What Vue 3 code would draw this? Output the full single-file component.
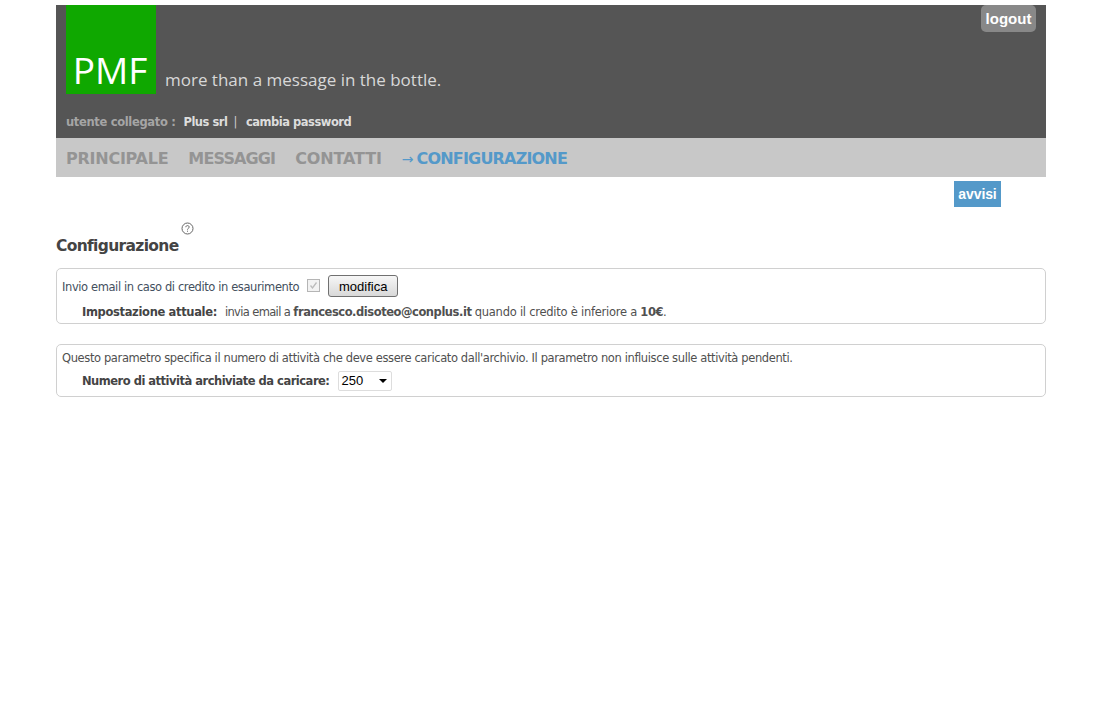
<script setup>
const navItems = [
  { label: 'PRINCIPALE', cls: 'nav-wide' },
  { label: 'MESSAGGI', cls: 'nav-tight' },
  { label: 'CONTATTI', cls: 'nav-mid' }
]
</script>

<template>
  <div class="page">
    <header class="header">
      <div class="brand">
        <div class="logo">PMF</div>
        <div class="tagline">more than a message in the bottle.</div>
        <a class="logout">logout</a>
      </div>
      <div class="user">
        <span class="user-label">utente collegato :</span>
        <b class="user-name">Plus srl</b>
        <span class="sep">|</span>
        <b class="user-name">cambia password</b>
      </div>
    </header>
    <nav class="nav">
      <a v-for="item in navItems" :key="item.label" class="nav-item" :class="item.cls">{{ item.label }}</a>
      <span class="nav-current"><span class="arrow">→</span>CONFIGURAZIONE</span>
    </nav>
    <div class="notice-row"><a class="notice">avvisi</a></div>
    <div class="title-row">
      <h1 class="title">Configurazione</h1>
      <svg class="help" width="13" height="13" viewBox="0 0 13 13">
        <circle cx="6.5" cy="6.5" r="5.5" fill="none" stroke="#666" stroke-width="1" />
        <path d="M4.8 5.2c0-1 .8-1.6 1.7-1.6s1.7.6 1.7 1.5c0 1.2-1.7 1.2-1.7 2.5" fill="none" stroke="#666" stroke-width="1" />
        <rect x="6" y="8.7" width="1" height="1" fill="#666" />
      </svg>
    </div>
    <section class="box first">
      <div class="line top-line">
        <span class="label">Invio email in caso di credito in esaurimento</span>
        <span class="check">
          <svg width="13" height="13" viewBox="0 0 13 13">
            <rect x="0.5" y="0.5" width="12" height="12" fill="#f2f2f2" stroke="#b5b5b5" />
            <path d="M3.5 6.5l2 2.5 4-5.5" fill="none" stroke="#bbb" stroke-width="1.3" />
          </svg>
        </span>
        <button class="btn">modifica</button>
      </div>
      <div class="line indent">
        <b class="strong-label imp">Impostazione attuale:</b>
        <span class="text"><span class="t-a">invia email a</span> <b class="t-b">francesco.disoteo@conplus.it</b> <span class="t-c">quando il credito è inferiore a</span> <b class="t-b">10€</b>.</span>
      </div>
    </section>
    <section class="box second">
      <div class="line text">Questo parametro specifica il numero di attività che deve essere caricato dall'archivio. Il parametro non influisce sulle attività pendenti.</div>
      <div class="line indent select-line">
        <b class="strong-label num">Numero di attività archiviate da caricare:</b>
        <span class="select">250<i class="caret"></i></span>
      </div>
    </section>
  </div>
</template>

<style>
html, body { margin: 0; background: #fff; }
</style>

<style scoped>
.page {
  width: 990px;
  margin: 5px 0 0 56px;
  font-family: "DejaVu Sans", Verdana, sans-serif;
  color: #505050;
}
.header {
  height: 133px;
  background: #555;
  display: flex;
  flex-direction: column;
  padding: 0 10px;
  box-sizing: border-box;
}
.brand {
  display: flex;
  align-items: flex-end;
  position: relative;
  height: 89px;
}
.logo {
  width: 90px;
  height: 89px;
  background: #0fa800;
  color: #fff;
  font: 37px/1 "Open Sans", sans-serif;
  display: flex;
  align-items: flex-end;
  justify-content: center;
  padding: 0 2px 6px 0;
  box-sizing: border-box;
}
.tagline {
  margin-left: 9px;
  color: #d8d8d8;
  font: 17px/1 "Open Sans", sans-serif;
  padding-bottom: 6px;
}
.logout {
  position: absolute;
  right: 0;
  top: 0;
  width: 55px;
  height: 27px;
  background: #888;
  border-radius: 5px;
  color: #fff;
  font: bold 15px/27px "Liberation Sans", sans-serif;
  text-align: center;
}
.user {
  margin-top: 20px;
  display: flex;
  font-size: 11.5px;
  line-height: 16px;
  letter-spacing: -0.48px;
  font-weight: bold;
}
.user-label { color: #a5a5a5; margin-right: 8px; letter-spacing: -0.33px; }
.user-name { color: #ddd; }
.sep { color: #ccc; margin: 0 9px 0 6px; font-weight: normal; }
.nav {
  height: 39px;
  background: #c8c8c8;
  display: flex;
  align-items: center;
  padding: 2px 0 0 10px;
  box-sizing: border-box;
  font-size: 16px;
  font-weight: bold;
  letter-spacing: -0.82px;
}
.nav-item { color: #949494; margin-right: 20px; }
.nav-wide { letter-spacing: -0.25px; }
.nav-tight { letter-spacing: -0.87px; }
.nav-mid { letter-spacing: -0.13px; }
.nav-current { color: #5499c9; }
.arrow { font-weight: normal; font-size: 14px; letter-spacing: 0; margin-right: 3px; }
.notice-row {
  height: 26px;
  margin-top: 4px;
  display: flex;
  justify-content: flex-end;
  padding-right: 45px;
}
.notice {
  width: 47px;
  height: 26px;
  background: #5499c9;
  color: #fff;
  font: bold 14px/26px "Liberation Sans", sans-serif;
  letter-spacing: -0.1px;
  text-align: center;
}
.title-row {
  display: flex;
  align-items: flex-start;
  height: 61px;
  padding-top: 15px;
  box-sizing: border-box;
}
.title {
  margin: 14px 0 0;
  font-size: 15.5px;
  line-height: 20px;
  letter-spacing: -0.67px;
  color: #444;
}
.help { margin-left: 2px; }
.box {
  border: 1px solid #d0d0d0;
  border-radius: 5px;
  padding: 0 5px;
  font-size: 11.5px;
  letter-spacing: -0.4px;
  box-sizing: border-box;
}
.first { height: 56px; margin-bottom: 20px; }
.second { height: 53px; }
.line { display: flex; align-items: center; }
.top-line { height: 33px; padding-top: 3px; box-sizing: border-box; }
.label { color: #44505e; }
.check { margin: -3px 0 0 8px; display: flex; }
.btn {
  margin: -2px 0 0 8px;
  width: 70px;
  height: 22px;
  padding: 0;
  border: 1px solid #707070;
  border-radius: 3px;
  background: linear-gradient(#f6f6f6, #d8d8d8);
  font: 13px "Liberation Sans", sans-serif;
  color: #000;
}
.indent { padding-left: 20px; }
.indent.line { height: 19px; }
.strong-label { margin-right: 8px; color: #444; }
.imp { letter-spacing: -0.34px; }
.num { letter-spacing: -0.5px; }
.t-a { letter-spacing: -0.65px; }
.t-b { letter-spacing: -0.45px; }
.t-c { letter-spacing: -0.25px; }
.text { color: #505050; white-space: pre-wrap; }
.second > .text { height: 25px; letter-spacing: -0.38px; }
.second .select-line { height: 22px; }
.select {
  margin-left: 1px;
  width: 54px;
  height: 20px;
  box-sizing: border-box;
  border: 1px solid #ddd;
  border-radius: 2px;
  background: #fff;
  color: #000;
  font: 13px/18px "Liberation Sans", sans-serif;
  letter-spacing: 0;
  padding-left: 2px;
  position: relative;
}
.caret {
  position: absolute;
  right: 4px;
  top: 7px;
  border: 4px solid transparent;
  border-top: 4px solid #000;
  border-bottom: 0;
}
</style>
